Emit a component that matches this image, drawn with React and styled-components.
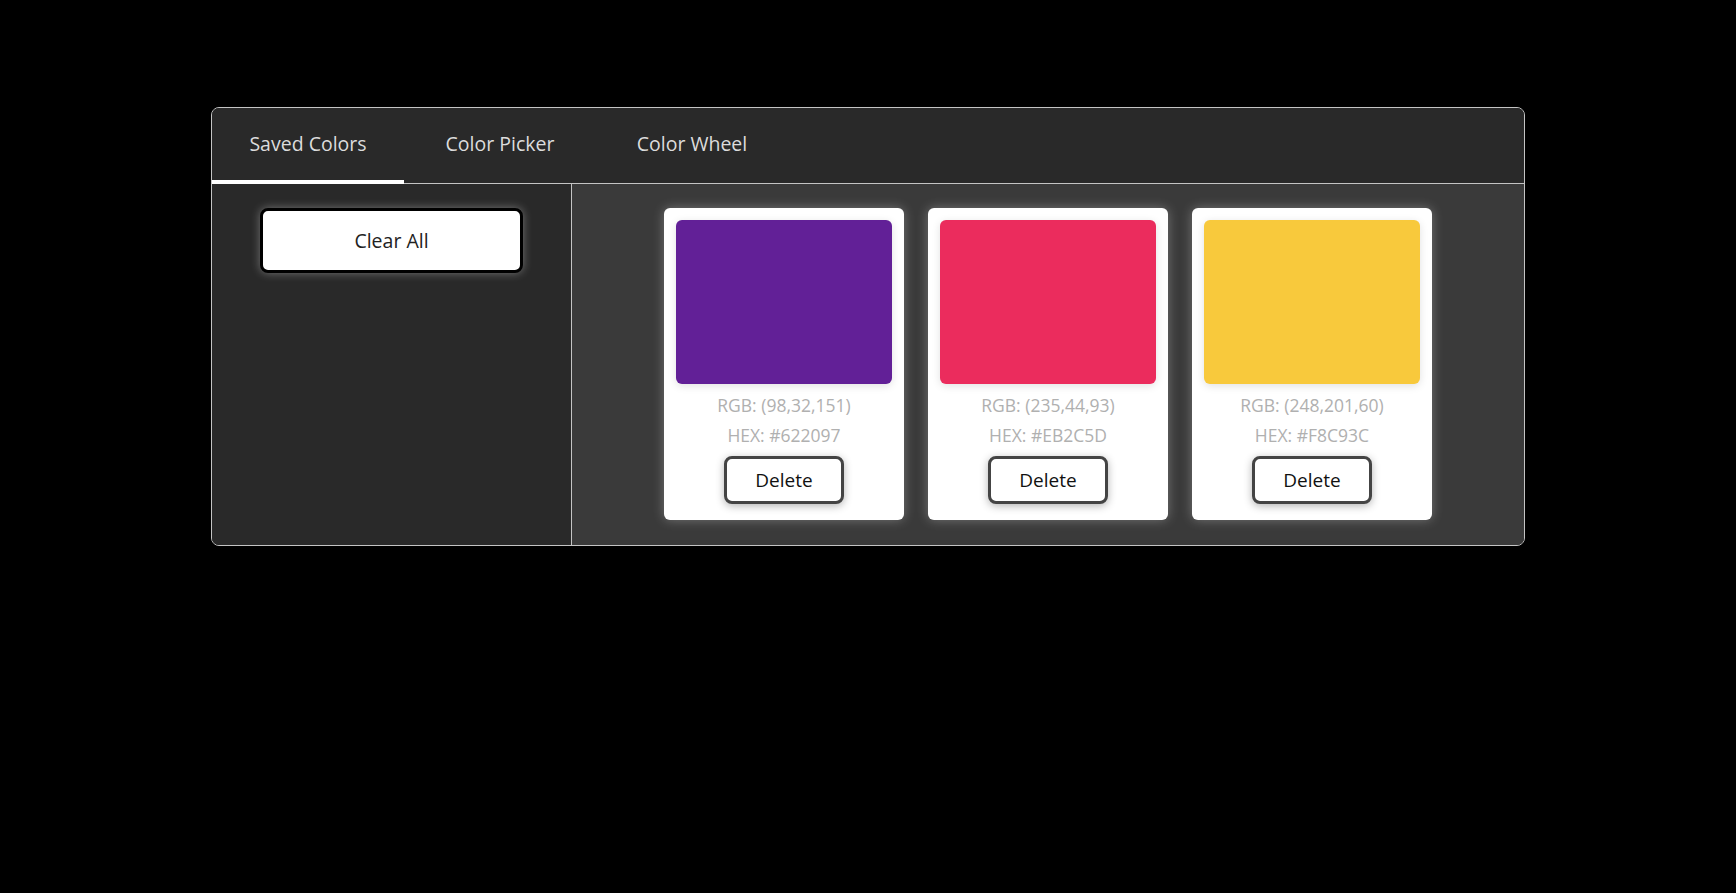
import React, { useState } from "react";
import styled, { createGlobalStyle } from "styled-components";

const GlobalStyle = createGlobalStyle`
  html, body {
    margin: 0;
    padding: 0;
    background: #000;
  }
  body {
    font-family: "Open Sans", "Liberation Sans", sans-serif;
  }
  * { box-sizing: border-box; }
`;

const Panel = styled.div`
  width: 1314px;
  margin: 107px auto 0;
  border: 1px solid #c4c4c4;
  border-radius: 8px;
  overflow: hidden;
  background: #292929;
`;

const TabBar = styled.div`
  display: flex;
  height: 76px;
  border-bottom: 1px solid #c4c4c4;
  background: #292929;
`;

const Tab = styled.button`
  width: 192px;
  height: 76px;
  margin-bottom: -1px;
  padding: 0 0 2px;
  border: none;
  border-bottom: 4px solid ${(p) => (p.$active ? "#ffffff" : "transparent")};
  background: transparent;
  color: #dcdcdc;
  font-family: inherit;
  font-size: 19.5px;
  cursor: pointer;
  display: flex;
  align-items: center;
  justify-content: center;
`;

const Body = styled.div`
  display: flex;
  height: 361px;
`;

const Sidebar = styled.div`
  width: 360px;
  flex-shrink: 0;
  border-right: 1px solid #c4c4c4;
  background: #292929;
  display: flex;
  flex-direction: column;
  align-items: center;
  padding-top: 24px;
`;

const ClearButton = styled.button`
  width: 263px;
  height: 65px;
  background: #fff;
  border: 3px solid #000;
  border-radius: 8px;
  box-shadow: 0 0 10px rgba(255, 255, 255, 0.35);
  font-family: inherit;
  font-size: 19.5px;
  color: #222;
  cursor: pointer;
`;

const Main = styled.div`
  flex: 1;
  background: #3a3a3a;
  display: flex;
  justify-content: center;
  align-items: flex-start;
  gap: 24px;
  padding-top: 24px;
`;

const Card = styled.div`
  width: 240px;
  background: #fff;
  border-radius: 6px;
  padding: 12px 12px 16px;
  display: flex;
  flex-direction: column;
  align-items: center;
  box-shadow: 0 0 12px rgba(255, 255, 255, 0.3);
`;

const Swatch = styled.div`
  width: 216px;
  height: 164px;
  border-radius: 6px;
  background: ${(p) => p.$color};
  box-shadow: 0 2px 8px rgba(0, 0, 0, 0.12);
`;

const Info = styled.div`
  margin-top: 6px;
  display: flex;
  flex-direction: column;
  align-items: center;
`;

const InfoLine = styled.div`
  line-height: 30px;
  font-size: 17.5px;
  color: #b0b0b0;
`;

const DeleteButton = styled.button`
  margin-top: 6px;
  width: 120px;
  height: 48px;
  background: #fff;
  border: 3px solid #444;
  border-radius: 8px;
  box-shadow: 0 2px 8px rgba(0, 0, 0, 0.3);
  font-family: inherit;
  font-size: 19px;
  color: #111;
  cursor: pointer;
`;

const initialColors = [
  { r: 98, g: 32, b: 151 },
  { r: 235, g: 44, b: 93 },
  { r: 248, g: 201, b: 60 },
];

const toHex = ({ r, g, b }) =>
  "#" + [r, g, b].map((v) => v.toString(16).padStart(2, "0")).join("").toUpperCase();

export default function App() {
  const [tab, setTab] = useState(0);
  const [colors, setColors] = useState(initialColors);
  const tabs = ["Saved Colors", "Color Picker", "Color Wheel"];

  return (
    <>
      <GlobalStyle />
      <Panel>
        <TabBar>
          {tabs.map((t, i) => (
            <Tab key={t} $active={tab === i} onClick={() => setTab(i)}>
              {t}
            </Tab>
          ))}
        </TabBar>
        <Body>
          <Sidebar>
            <ClearButton onClick={() => setColors([])}>Clear All</ClearButton>
          </Sidebar>
          <Main>
            {colors.map((c, i) => {
              const hex = toHex(c);
              return (
                <Card key={hex + i}>
                  <Swatch $color={hex} />
                  <Info>
                    <InfoLine>RGB: ({c.r},{c.g},{c.b})</InfoLine>
                    <InfoLine>HEX: {hex}</InfoLine>
                  </Info>
                  <DeleteButton onClick={() => setColors(colors.filter((_, j) => j !== i))}>
                    Delete
                  </DeleteButton>
                </Card>
              );
            })}
          </Main>
        </Body>
      </Panel>
    </>
  );
}
